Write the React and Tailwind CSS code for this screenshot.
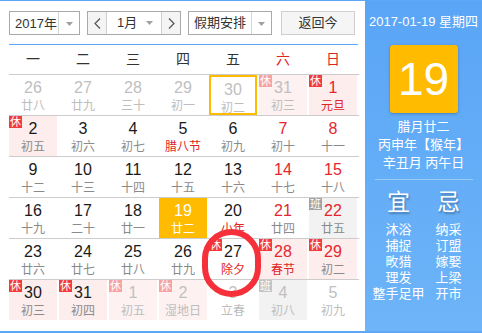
import React from "react";

const F = { fontFamily: '"Liberation Sans","Noto Sans CJK SC",sans-serif' };

const rows = [
  [
    { n: 26, l: "廿八", o: 1 },
    { n: 27, l: "廿九", o: 1 },
    { n: 28, l: "三十", o: 1 },
    { n: 29, l: "初一", o: 1 },
    { n: 30, l: "初二", o: 1, sel: 1 },
    { n: 31, l: "初三", o: 1, b: "休", bg: "pink" },
    { n: 1, l: "元旦", b: "休", bg: "pink", red: 1, lr: 1 },
  ],
  [
    { n: 2, l: "初五", b: "休", bg: "pink" },
    { n: 3, l: "初六" },
    { n: 4, l: "初七" },
    { n: 5, l: "腊八节", lr: 1 },
    { n: 6, l: "初九" },
    { n: 7, l: "初十", red: 1 },
    { n: 8, l: "十一", red: 1 },
  ],
  [
    { n: 9, l: "十二" },
    { n: 10, l: "十三" },
    { n: 11, l: "十四" },
    { n: 12, l: "十五" },
    { n: 13, l: "十六" },
    { n: 14, l: "十七", red: 1 },
    { n: 15, l: "十八", red: 1 },
  ],
  [
    { n: 16, l: "十九" },
    { n: 17, l: "二十" },
    { n: 18, l: "廿一" },
    { n: 19, l: "廿二", today: 1 },
    { n: 20, l: "小年", lr: 1 },
    { n: 21, l: "廿四", red: 1 },
    { n: 22, l: "廿五", red: 1, b: "班", bg: "grey" },
  ],
  [
    { n: 23, l: "廿六" },
    { n: 24, l: "廿七" },
    { n: 25, l: "廿八" },
    { n: 26, l: "廿九" },
    { n: 27, l: "除夕", lr: 1, b: "休" },
    { n: 28, l: "春节", red: 1, lr: 1, b: "休", bg: "pink" },
    { n: 29, l: "初二", red: 1, b: "休", bg: "pink" },
  ],
  [
    { n: 30, l: "初三", b: "休", bg: "pink" },
    { n: 31, l: "初四", b: "休", bg: "pink" },
    { n: 1, l: "初五", o: 1, b: "休", bg: "pink" },
    { n: 2, l: "湿地日", o: 1, b: "休", bg: "pink" },
    { n: 3, l: "立春", o: 1 },
    { n: 4, l: "初八", o: 1, b: "班", bg: "grey" },
    { n: 5, l: "初九", o: 1 },
  ],
];

function Caret() {
  return (
    <svg width="7" height="4" viewBox="0 0 7 4">
      <polygon points="0,0 7,0 3.5,4" fill="#a0a0a0" />
    </svg>
  );
}

function Cell({ c }) {
  let bg = "bg-white";
  if (c.today) bg = "bg-[#ffbb00]";
  else if (c.bg === "pink") bg = c.o ? "bg-[#fdf1f1]" : "bg-[#fdeded]";
  else if (c.bg === "grey") bg = "bg-[#f2f2f2]";

  let num = "text-[#1a1a1a]";
  if (c.today) num = "text-white";
  else if (c.o) num = "text-[#c0c0c0]";
  else if (c.red) num = "text-[#e5262e]";

  let lun = "text-[#8a8a8a]";
  if (c.today) lun = "text-white";
  else if (c.o) lun = "text-[#bdbdbd]";
  else if (c.lr) lun = "text-[#e02424]";

  let badge = "";
  if (c.b === "休") badge = c.o ? "bg-[#f8a3a3]" : "bg-[#f43b3b]";
  if (c.b === "班") badge = c.o ? "bg-[#c4c4c4]" : "bg-[#a3a3a3]";

  return (
    <div className="w-[50px] h-[40px] pr-[2px]">
      <div
        className={`relative w-[48px] h-[40px] flex flex-col items-center pt-[4px] ${bg} ${
          c.sel ? "border-2 border-[#ffbb00] pt-[2px]" : ""
        }`}
      >
        {c.b && (
          <div
            className={`absolute left-0 top-0 w-[13px] h-[12px] text-[11px] leading-[12px] text-white text-center ${badge}`}
          >
            {c.b}
          </div>
        )}
        <div className={`text-[16px] leading-[18px] ${num}`}>{c.n}</div>
        <div className={`text-[12px] leading-[14px] mt-[2px] whitespace-nowrap ${lun}`}>{c.l}</div>
      </div>
    </div>
  );
}

export default function App() {
  const week = ["一", "二", "三", "四", "五", "六", "日"];
  const yi = ["沐浴", "捕捉", "畋猎", "理发", "整手足甲"];
  const ji = ["纳采", "订盟", "嫁娶", "上梁", "开市"];
  return (
    <div
      style={F}
      className="w-[482px] h-[333px] flex bg-white border-t border-b-2 border-[#5ea8f6] overflow-hidden"
    >
      {/* left */}
      <div className="w-[365px] pl-[9px] pt-[10px]">
        <div className="flex items-start h-[24px] text-[13px] text-[#333]">
          <div className="w-[71px] h-[24px] border border-[#a9a9a9] flex bg-white">
            <div className="w-[48px] flex items-center justify-end pr-[1px] leading-none">2017年</div>
            <div className="flex-1 border-l border-[#d4d4d4] flex items-center justify-center pt-[1px]">
              <Caret />
            </div>
          </div>
          <div className="ml-[7px] w-[94px] h-[24px] border border-[#a9a9a9] flex bg-white">
            <div className="w-[19px] bg-[#f4f4f4] flex items-center justify-center border-r border-[#cfcfcf]">
              <svg width="7" height="11" viewBox="0 0 7 11">
                <polyline points="6,0.5 1,5.5 6,10.5" fill="none" stroke="#555" strokeWidth="1.2" />
              </svg>
            </div>
            <div className="w-[54px] flex items-center">
              <span className="ml-[10px] w-[24px]">1月</span>
              <span className="ml-[5px] flex"><Caret /></span>
            </div>
            <div className="flex-1 bg-[#f4f4f4] flex items-center justify-center border-l border-[#cfcfcf]">
              <svg width="7" height="11" viewBox="0 0 7 11">
                <polyline points="1,0.5 6,5.5 1,10.5" fill="none" stroke="#555" strokeWidth="1.2" />
              </svg>
            </div>
          </div>
          <div className="ml-[7px] w-[84px] h-[24px] border border-[#a9a9a9] flex bg-white">
            <div className="w-[62px] flex items-center justify-center">假期安排</div>
            <div className="flex-1 border-l border-[#d4d4d4] flex items-center justify-center pt-[1px]">
              <Caret />
            </div>
          </div>
          <div className="ml-[9px] w-[74px] h-[24px] border border-[#cfcfcf] bg-[#f5f5f5] flex items-center justify-center">
            返回今
          </div>
        </div>
        <div className="mt-[9px] w-[349px] h-px bg-[#5ea8f6]" />
        <div className="relative w-[350px]">
          <div className="flex h-[30px] border-b border-[#cccccc]">
            {week.map((w, i) => (
              <div
                key={w}
                className={`w-[50px] flex items-center justify-center text-[14px] pr-[2px] ${
                  i >= 5 ? "text-[#e02424]" : "text-[#333]"
                }`}
              >
                {w}
              </div>
            ))}
          </div>
          {rows.map((r, i) => (
            <div
              key={i}
              className={`flex ${i < rows.length - 1 ? "border-b border-[#cccccc]" : ""}`}
            >
              {r.map((c, j) => (
                <Cell key={j} c={c} />
              ))}
            </div>
          ))}
          <div className="absolute left-[193px] top-[184px] w-[59px] h-[68px] rounded-full border-[6px] border-[#f5303a]" />
        </div>
      </div>
      {/* right */}
      <div className="flex-1 bg-gradient-to-b from-[#5aa5f6] to-[#6db4f8] text-white flex flex-col items-center">
        <div className="mt-[13px] text-[13px] leading-[16px] whitespace-nowrap">2017-01-19 星期四</div>
        <div className="mt-[15px] w-[68px] h-[68px] rounded-[3px] bg-[#ffbb00] shadow-[0_1px_3px_rgba(0,0,0,0.25)] flex items-center justify-center text-[46px] leading-none">
          19
        </div>
        <div className="mt-[5px] text-[13px] leading-[18px] text-center whitespace-nowrap">
          <div>腊月廿二</div>
          <div>丙申年【猴年】</div>
          <div>辛丑月 丙午日</div>
        </div>
        <div className="mt-[7px] w-[98px] h-px bg-[#9ccbfa]" />
        <div className="mt-[9px] w-[100px] grid grid-cols-2">
          <div className="flex flex-col items-center">
            <div className="text-[23px] leading-[26px] [text-shadow:1px_2px_2px_rgba(0,0,0,0.3)]">宜</div>
            <div className="mt-[7px] text-[13px] leading-[16px] text-center whitespace-nowrap">
              {yi.map((t) => (
                <div key={t}>{t}</div>
              ))}
            </div>
          </div>
          <div className="flex flex-col items-center">
            <div className="text-[23px] leading-[26px] [text-shadow:1px_2px_2px_rgba(0,0,0,0.3)]">忌</div>
            <div className="mt-[7px] text-[13px] leading-[16px] text-center whitespace-nowrap">
              {ji.map((t) => (
                <div key={t}>{t}</div>
              ))}
            </div>
          </div>
        </div>
      </div>
    </div>
  );
}
